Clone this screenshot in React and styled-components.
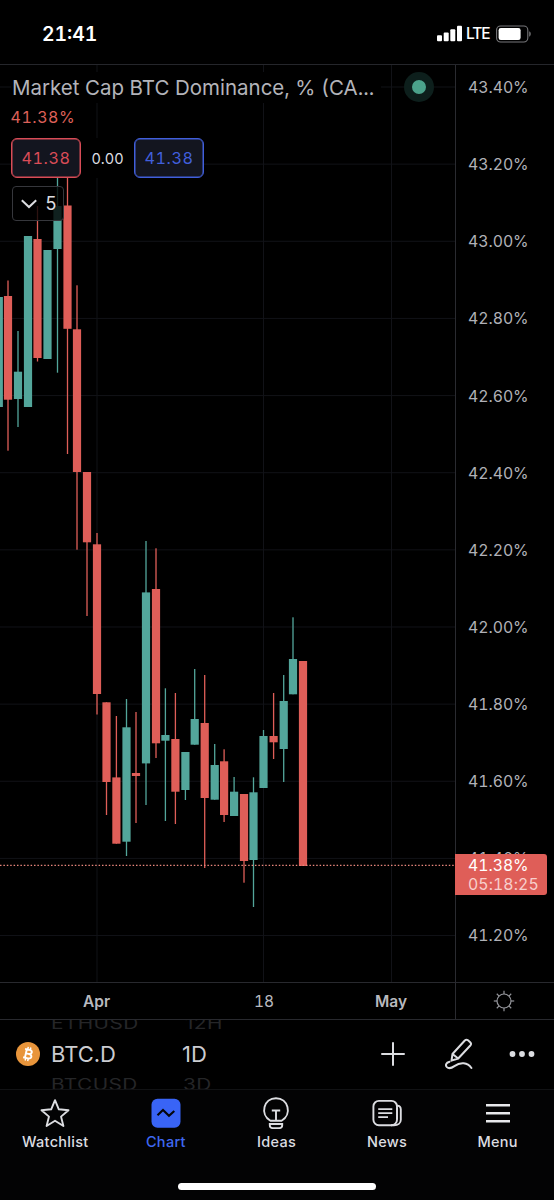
import React from 'react';
import styled, { createGlobalStyle } from 'styled-components';

const UP = '#53a69b';
const DOWN = '#df5e58';

const GlobalStyle = createGlobalStyle`
  * {
    box-sizing: border-box;
  }
  body {
    margin: 0;
    background: #000;
    font-family: Inter, 'Liberation Sans', sans-serif;
    font-variant-numeric: tabular-nums;
  }
`;

// [x, high, body top, body bottom, low, color]
const candles = [
  [-1.2, 297, 297, 407, 407, UP],
  [8, 280.5, 296, 399.7, 450.7, DOWN],
  [18, 331, 371.7, 399, 427, UP],
  [28, 236, 236, 407, 407, UP],
  [37.5, 206, 239, 358, 361.5, DOWN],
  [47.5, 250, 250, 359, 359, UP],
  [57.5, 150, 206, 249, 372.7, UP],
  [67.5, 150, 205.5, 328.8, 454, DOWN],
  [77, 285.3, 329.3, 472, 549.7, DOWN],
  [87, 472, 472, 542.3, 616, DOWN],
  [97, 533, 544.3, 694, 714.5, DOWN],
  [106.5, 702.3, 702.3, 782, 815, DOWN],
  [116.4, 716, 777.4, 843.7, 843.7, DOWN],
  [126.5, 699, 727.3, 841.7, 856, UP],
  [136, 712, 773, 776, 823, DOWN],
  [146, 541, 592.4, 763.4, 805, UP],
  [156, 548.3, 589, 743.3, 758, DOWN],
  [165.4, 688.3, 735, 740.7, 821, UP],
  [175.4, 693, 739, 791.7, 824, DOWN],
  [185.4, 752, 752, 790, 800, UP],
  [194.7, 669, 719, 744.7, 744.7, UP],
  [204.7, 675, 723, 798, 868, DOWN],
  [214.7, 744, 765, 799.7, 799.7, UP],
  [224.1, 749.3, 761.3, 815, 822, DOWN],
  [234.1, 777, 791.7, 816, 816, UP],
  [244, 794, 794, 861, 882.7, DOWN],
  [253.5, 777.3, 792.3, 860, 907, UP],
  [263.5, 730, 736, 788, 788, UP],
  [273.6, 693, 736, 742.3, 759, DOWN],
  [283.7, 675, 701, 749, 782, UP],
  [293, 617.3, 659, 694.3, 694.3, UP],
  [303, 661, 661, 866, 866, DOWN],
];

const prices = [
  '43.40%', '43.20%', '43.00%', '42.80%', '42.60%', '42.40%',
  '42.20%', '42.00%', '41.80%', '41.60%', '41.40%', '41.20%',
];

const Screen = styled.div`
  width: 554px;
  height: 1200px;
  display: flex;
  flex-direction: column;
  overflow: hidden;
  background: #000;
  color: #dcdde1;
`;

const StatusBar = styled.header`
  height: 65px;
  flex: none;
  display: flex;
  align-items: center;
  justify-content: space-between;
  padding: 3px 22px 0 42px;
  border-bottom: 1px solid #25262b;
  color: #fff;
`;

const Clock = styled.span`
  font-size: 19.4px;
  font-weight: 600;
  line-height: 24px;
`;

const Signals = styled.div`
  display: flex;
  align-items: center;
`;

const Carrier = styled.span`
  margin: 1px 6px 0 3px;
  width: 24px;
  font-size: 15.5px;
  font-weight: 500;
  line-height: 20px;
  letter-spacing: -1.1px;
`;

const ChartArea = styled.main`
  flex: none;
  display: grid;
  grid-template-columns: 455px 99px;
  grid-template-rows: 917px 37px;
  border-bottom: 1px solid #28292e;
`;

const Plot = styled.section`
  position: relative;
  overflow: hidden;

  > svg {
    display: block;
  }
`;

const Legend = styled.div`
  position: absolute;
  top: 6px;
  left: 11px;
  right: 20px;
  display: flex;
  flex-direction: column;
  align-items: flex-start;
`;

const TitleRow = styled.div`
  display: flex;
  align-items: center;
  justify-content: space-between;
  width: 424px;
  height: 32px;
`;

const Title = styled.h1`
  margin: 0;
  width: 370px;
  padding-left: 1px;
  background: #000;
  color: #b3b4ba;
  font-size: 20.5px;
  font-weight: 400;
  line-height: 31px;
  white-space: nowrap;
`;

const LiveDot = styled.span`
  width: 30px;
  height: 30px;
  margin-right: 1px;
  border: 8px solid #0d1f1c;
  border-radius: 50%;
  background: #4ba28b;
`;

const LastValue = styled.span`
  height: 24px;
  margin-top: 2px;
  margin-left: -0.5px;
  background: #000;
  color: #dc6059;
  font-size: 16px;
  line-height: 25px;
  letter-spacing: 0.55px;
`;

const QuoteRow = styled.div`
  display: flex;
  align-items: center;
  margin-top: 9px;
  background: #000;
`;

const Quote = styled.button`
  width: 70px;
  height: 40px;
  padding: 0;
  border: 1.5px solid ${({ $color }) => $color};
  box-shadow: inset 0 0 0 0.5px ${({ $color }) => $color};
  border-radius: 6px;
  background: #13151f;
  color: ${({ $color }) => $color};
  font: inherit;
  font-size: 16.2px;
  letter-spacing: 0.5px;
`;

const Spread = styled.span`
  width: 53px;
  color: #dcdde1;
  font-size: 14.5px;
  text-align: center;
`;

const Collapse = styled.button`
  display: flex;
  align-items: center;
  justify-content: space-between;
  width: 52px;
  height: 35px;
  margin: 8px 0 0 1px;
  padding: 0 6px 0 8px;
  border: 1px solid #36373c;
  border-radius: 4px;
  background: rgba(0, 0, 0, 0.8);
  color: #dcdde1;
  font: inherit;
  font-size: 18px;
`;

const PriceScale = styled.aside`
  position: relative;
  display: flex;
  flex-direction: column;
  gap: 55.14px;
  padding: 12px 0 0 12px;
  border-left: 1px solid #2a2b30;
  color: #b0b1b7;
  font-size: 15.8px;
  line-height: 22px;
  letter-spacing: -0.02px;
`;

const LastPrice = styled.div`
  position: absolute;
  top: 789px;
  left: -1px;
  width: 92px;
  height: 41px;
  padding: 2px 0 0 13px;
  border-radius: 0 3px 3px 0;
  background: ${DOWN};
  color: #fff;
  line-height: 19px;
`;

const Countdown = styled.div`
  color: #f8cfcc;
  letter-spacing: 0.1px;
`;

const TimeScale = styled.div`
  display: flex;
  align-items: center;
  border-top: 1px solid #28292e;
  color: #b8b9bf;
  font-size: 15.5px;
`;

const Tick = styled.span`
  width: ${({ $width }) => $width}px;
  font-weight: ${({ $major }) => ($major ? 600 : 400)};
  text-align: center;
`;

const ScaleSettings = styled.div`
  display: flex;
  align-items: center;
  justify-content: center;
  padding: 0 2px 1px 0;
  border-top: 1px solid #28292e;
  border-left: 1px solid #2a2b30;
`;

const SymbolBar = styled.section`
  flex: none;
  display: flex;
  height: 69px;
  padding-left: 16px;
`;

const Coin = styled.div`
  width: 35px;
  padding-top: 22px;
`;

const Wheel = styled.div`
  display: flex;
  flex-direction: column;
  justify-content: center;
  width: ${({ $width }) => $width}px;
  height: 69px;
  overflow: hidden;
  font-variant-numeric: proportional-nums;
  white-space: nowrap;
`;

const Selected = styled.span`
  flex: none;
  height: 37px;
  color: #cbccd0;
  font-size: 22px;
  line-height: 37px;
`;

const Faded = styled.span`
  flex: none;
  height: 24px;
  padding-left: ${({ $indent }) => $indent || 0}px;
  color: #252628;
  font-size: 20.8px;
  line-height: 24px;
  letter-spacing: 0.4px;
  transform: scaleY(0.75);
`;

const Tools = styled.div`
  display: flex;
  align-items: center;
  gap: 36px;
  margin-left: auto;
  padding: 0 19px 1px 0;

  svg:first-child {
    margin-right: 4px;
  }
`;

const TabBar = styled.nav`
  flex: none;
  display: flex;
  height: 112px;
  padding-right: 1px;
  border-top: 1px solid #111214;
  background: #030304;
`;

const Tab = styled.a`
  flex: 1;
  display: flex;
  flex-direction: column;
  align-items: center;
  padding-top: 7px;
  color: ${({ $active }) => ($active ? '#3f68f2' : '#dcdde1')};
  font-size: 14.5px;
  font-weight: 500;
  line-height: 20px;
  letter-spacing: 0.3px;

  svg {
    margin-bottom: 3px;
  }
`;

const HomeIndicator = styled.div`
  width: 198px;
  height: 7px;
  margin: -18px auto 0;
  border-radius: 4px;
  background: #fff;
  z-index: 1;
  flex: none;
`;

const CandleChart = () => (
  <svg width="455" height="917" viewBox="0 65 455 917">
    <g fill="#111217">
      {prices.map((p, i) => (
        <rect key={p} x="0" y={86.5 + i * 77.14} width="455" height="1" />
      ))}
      {[96.5, 263, 391].map((x) => (
        <rect key={x} x={x} y="65" width="1" height="917" />
      ))}
    </g>
    {candles.map(([x, high, top, bottom, low, color]) => (
      <g key={x} fill={color}>
        <rect x={x - 0.65} y={high} width="1.3" height={low - high} />
        <rect x={x - 4.1} y={top} width="8.2" height={bottom - top} />
      </g>
    ))}
    <path d="M0 865.3H455" stroke="#e8867c" strokeWidth="1.3" strokeDasharray="1.5 1.9" />
  </svg>
);

const Signal = () => (
  <svg width="26" height="17" viewBox="0 0 26 17" fill="#fff">
    <rect x="0" y="10.3" width="5" height="6" rx="1" />
    <rect x="6.7" y="7.5" width="5" height="8.8" rx="1" />
    <rect x="13.3" y="4.2" width="5" height="12.1" rx="1" />
    <rect x="20" y="0.7" width="5" height="15.6" rx="1" />
  </svg>
);

const Battery = () => (
  <svg width="36" height="18" viewBox="0 0 36 18">
    <rect x="0.6" y="1" width="31.2" height="16" rx="4" fill="none" stroke="#77777a" strokeWidth="1.1" />
    <rect x="2.6" y="3" width="22" height="12" rx="2.2" fill="#fff" />
    <path d="M33.3 6.3c1.8.8 1.8 4.6 0 5.4z" fill="#88888b" />
  </svg>
);

const Sun = () => (
  <svg width="22" height="22" viewBox="-11 -11 22 22" fill="none" stroke="#94959b" strokeWidth="1.2">
    <circle r="7" />
    {[0, 45, 90, 135, 180, 225, 270, 315].map((a) => (
      <path key={a} d="M0 -7V-10.2" transform={`rotate(${a})`} />
    ))}
  </svg>
);

const Bitcoin = () => (
  <svg width="24" height="24" viewBox="0 0 24 24">
    <circle cx="12" cy="12" r="12" fill="#e8953b" />
    <g transform="rotate(13 12 12)" fill="none" stroke="#fff" strokeWidth="1.9">
      <path d="M8 7.7H12.5C16.3 7.7 16.3 11.8 12.5 11.8H9.8M12.5 11.8C17 11.8 17 16.3 12.8 16.3H8M9.8 7.7V16.3" />
      <path d="M10.7 5V7.6M13.3 5V7.6M10.7 16.5V19M13.3 16.5V19" strokeWidth="1.5" />
    </g>
  </svg>
);

const Plus = () => (
  <svg width="24" height="24" viewBox="0 0 24 24" stroke="#dcdde1" strokeWidth="2" strokeLinecap="round">
    <path d="M1 12H23M12 1V23" />
  </svg>
);

const Pencil = () => (
  <svg
    width="28"
    height="32"
    viewBox="0 0 28 32"
    fill="none"
    stroke="#dcdde1"
    strokeWidth="2"
    strokeLinejoin="round"
    strokeLinecap="round"
  >
    <path d="M7.5 16L19.8 2.5Q21.4 1 23 2.3L25.2 4.2Q26.8 5.8 25.3 7.5L13.2 20.5L6.5 22.6ZM7.5 16L13.2 20.5" />
    <path d="M4.6 23.7C.8 24.4.2 27.4 1.9 29.1C4 31.1 7 29.8 9.4 28.1C15.5 23.8 22.5 24.4 26.4 30" />
  </svg>
);

const Dots = () => (
  <svg width="26" height="8" viewBox="0 0 26 8" fill="#dcdde1">
    <circle cx="3.5" cy="4" r="2.9" />
    <circle cx="13" cy="4" r="2.9" />
    <circle cx="22.5" cy="4" r="2.9" />
  </svg>
);

const Star = () => (
  <svg width="30" height="32" viewBox="0 0 30 32" fill="none" stroke="#dcdde1" strokeWidth="1.9" strokeLinejoin="round">
    <path d="M15 3.2L18.8 12.3L28.5 13.2L21 19.6L23.4 29L15 23.7L6.6 29L9 19.6L1.5 13.2L11.2 12.3Z" />
  </svg>
);

const ChartIcon = () => (
  <svg width="30" height="32" viewBox="0 0 30 32">
    <rect x="0.5" y="1.7" width="29" height="29" rx="6" fill="#3964f6" />
    <path d="M6.5 18.3L12 13L18 18.8L23.3 14" fill="none" stroke="#05060a" strokeWidth="2.1" />
  </svg>
);

const Bulb = () => (
  <svg width="30" height="32" viewBox="0 0 30 32" fill="none" stroke="#dcdde1" strokeWidth="1.9">
    <path d="M9.4 23.8C-1.5 17 2.8 1.2 15 1.2S31.5 17 20.6 23.8Z" strokeLinejoin="round" />
    <path d="M10.8 13.5H19.2M15 13.5V23.5" />
    <path d="M8.8 27H21.2V28.3Q21.2 31.1 18.3 31.1H11.7Q8.8 31.1 8.8 28.3Z" />
  </svg>
);

const NewsIcon = () => (
  <svg width="30" height="32" viewBox="0 0 30 32" fill="none" stroke="#dcdde1" strokeWidth="1.9">
    <rect x="1.4" y="3.9" width="23.6" height="24.4" rx="5.5" />
    <path d="M25 8.6C27.7 8.6 28.8 10.2 28.8 12.5V22.7C28.8 26.2 26 28.3 22 28.3H19M25 11V22" />
    <path d="M6.2 12.1H20.3M6.2 16.1H20.3M6.2 20.1H16" strokeWidth="1.7" />
  </svg>
);

const MenuIcon = () => (
  <svg width="30" height="32" viewBox="0 0 30 32" fill="none" stroke="#e8e9ec" strokeWidth="2.5">
    <path d="M3 8.3H27M3 16.3H27M3 24.3H27" />
  </svg>
);

const tabs = [
  { label: 'Watchlist', icon: <Star /> },
  { label: 'Chart', icon: <ChartIcon />, active: true },
  { label: 'Ideas', icon: <Bulb /> },
  { label: 'News', icon: <NewsIcon /> },
  { label: 'Menu', icon: <MenuIcon /> },
];

export default function App() {
  return (
    <Screen>
      <GlobalStyle />
      <StatusBar>
        <Clock>21:41</Clock>
        <Signals>
          <Signal />
          <Carrier>LTE</Carrier>
          <Battery />
        </Signals>
      </StatusBar>
      <ChartArea>
        <Plot>
          <CandleChart />
          <Legend>
            <TitleRow>
              <Title>Market Cap BTC Dominance, % (CA...</Title>
              <LiveDot />
            </TitleRow>
            <LastValue>41.38%</LastValue>
            <QuoteRow>
              <Quote $color="#d94c57">41.38</Quote>
              <Spread>0.00</Spread>
              <Quote $color="#415fdb">41.38</Quote>
            </QuoteRow>
            <Collapse>
              <svg width="16" height="10" viewBox="0 0 16 10" fill="none" stroke="#dcdde1" strokeWidth="2">
                <path d="M0.8 1.2L8 8L15.2 1.2" />
              </svg>
              5
            </Collapse>
          </Legend>
        </Plot>
        <PriceScale>
          {prices.map((price) => (
            <span key={price}>{price}</span>
          ))}
          <LastPrice>
            41.38%
            <Countdown>05:18:25</Countdown>
          </LastPrice>
        </PriceScale>
        <TimeScale>
          <Tick $width={193} $major>Apr</Tick>
          <Tick $width={142}>18</Tick>
          <Tick $width={112} $major>May</Tick>
        </TimeScale>
        <ScaleSettings>
          <Sun />
        </ScaleSettings>
      </ChartArea>
      <SymbolBar>
        <Coin>
          <Bitcoin />
        </Coin>
        <Wheel $width={131}>
          <Faded>ETHUSD</Faded>
          <Selected>BTC.D</Selected>
          <Faded>BTCUSD</Faded>
        </Wheel>
        <Wheel $width={60}>
          <Faded $indent={3}>12H</Faded>
          <Selected>1D</Selected>
          <Faded $indent={1}>3D</Faded>
        </Wheel>
        <Tools>
          <Plus />
          <Pencil />
          <Dots />
        </Tools>
      </SymbolBar>
      <TabBar>
        {tabs.map(({ label, icon, active }) => (
          <Tab key={label} $active={active}>
            {icon}
            {label}
          </Tab>
        ))}
      </TabBar>
      <HomeIndicator />
    </Screen>
  );
}
